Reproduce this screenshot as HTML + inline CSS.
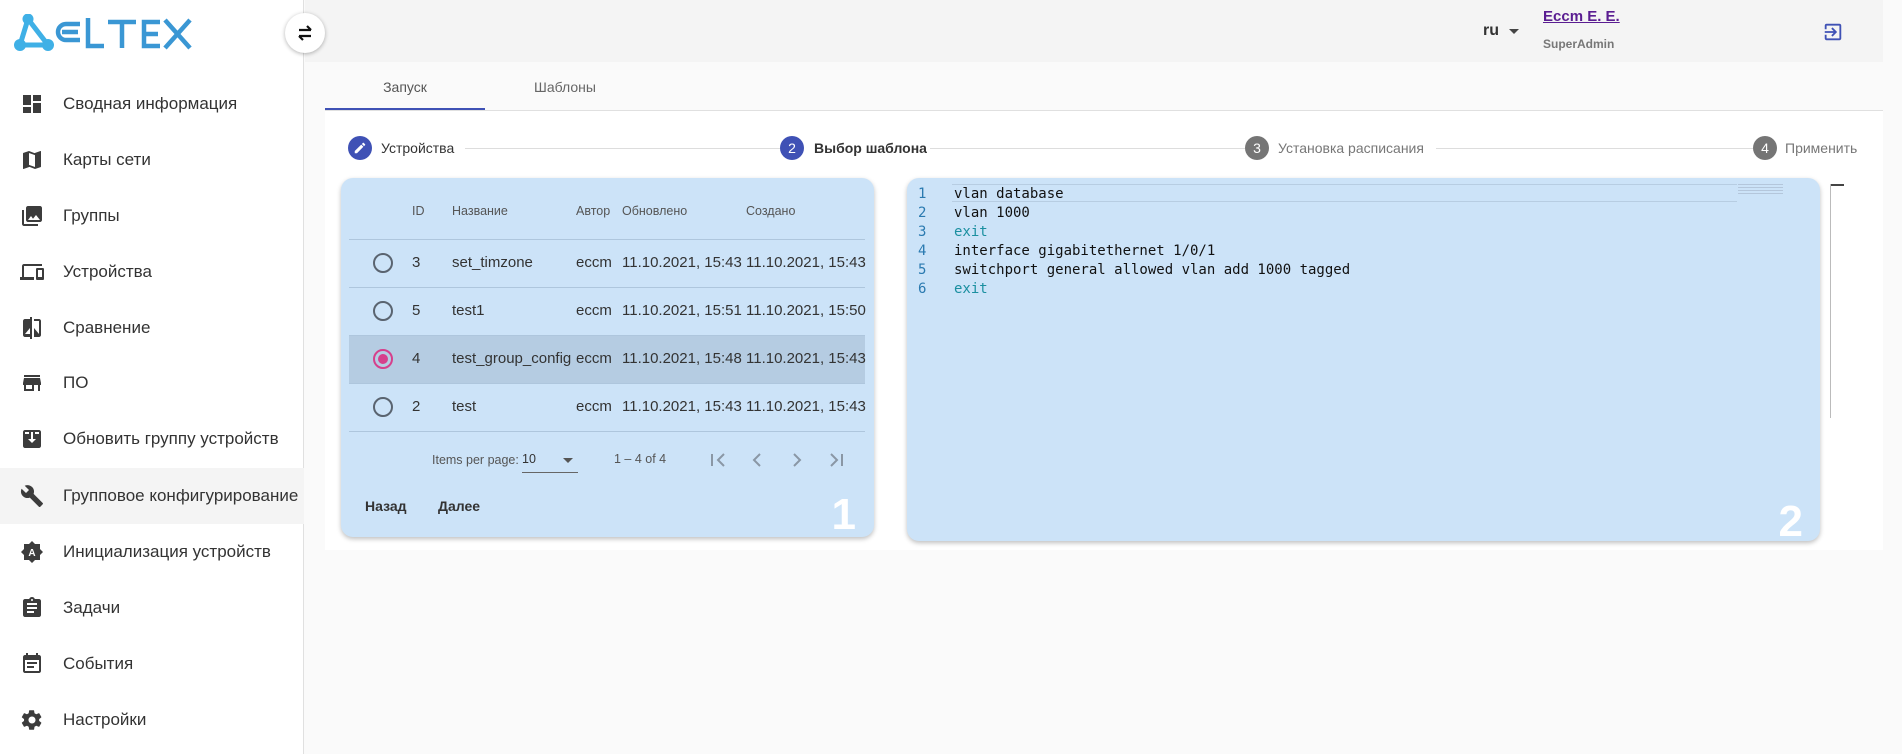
<!DOCTYPE html>
<html><head><meta charset="utf-8"><style>
*{box-sizing:border-box;margin:0;padding:0}
body{width:1902px;height:754px;overflow:hidden;background:#fafafa;font-family:"Liberation Sans",sans-serif;color:#333;position:relative}
.abs{position:absolute}
.side{left:0;top:0;width:304px;height:754px;background:#fff;border-right:1px solid #e0e0e0}
.mi{position:absolute;left:0;width:304px;height:56px;display:flex;align-items:center}
.mi svg{position:absolute;left:20px;width:24px;height:24px;fill:#3c3c3c}
.mi span{position:absolute;left:63px;font-size:17px;color:#333}
.hdr{left:305px;top:0;width:1578px;height:62px;background:#f4f4f4}
.panel{left:325px;top:111px;width:1558px;height:439px;background:#fff}
.card{background:#cce3f8;border-radius:12px;box-shadow:0 2px 5px rgba(0,0,0,.25)}
.th{font-size:12.5px;color:#555;top:204px}
.td{font-size:15px;color:#333}
.hl{position:absolute;left:349px;width:516px;height:1px;background:#aec6dd}
.radio{position:absolute;left:373px;width:20px;height:20px;border:2px solid #5a6470;border-radius:50%}
.step{font-size:14px;color:#333}
.sc{position:absolute;width:24px;height:24px;border-radius:50%;color:#fff;font-size:14px;text-align:center;line-height:24px}
.code{font-family:"DejaVu Sans Mono","Liberation Mono",monospace;font-size:14px;line-height:19px;white-space:pre}
</style></head><body>
<div class="abs side"></div>
<!-- logo -->
<svg class="abs" style="left:14px;top:14px" width="180" height="38" viewBox="0 0 180 38">
<g fill="#3fb0e6"><circle cx="14" cy="5" r="5.5"/><circle cx="6" cy="31" r="6"/><circle cx="34" cy="31" r="6"/></g>
<g stroke="#3fb0e6" stroke-width="5" fill="none"><path d="M14 5L6 31L34 31Z"/></g>
<g fill="none" stroke="#3a97d4" stroke-width="4.5">
<path d="M66 10H52a8 8 0 0 0 0 16H66M48 18H64"/>
<path d="M74 4V32H90"/>
<path d="M94 8H122M108 8V34"/>
<path d="M146 8H130V32H146M130 20H144"/>
<path d="M151 6L176 34M176 6L151 34"/>
</g></svg>
<!-- menu -->
<div class="mi" style="top:76px"><svg viewBox="0 0 24 24"><path d="M3 13h8V3H3v10zm0 8h8v-6H3v6zm10 0h8V11h-8v10zm0-18v6h8V3h-8z"/></svg><span>Сводная информация</span></div>
<div class="mi" style="top:132px"><svg viewBox="0 0 24 24"><path d="M20.5 3l-6 2.1L9 3 3.4 4.9c-.2.1-.4.3-.4.5V20.5c0 .3.2.5.5.5l6-2.1 5.5 2.1 5.6-1.9c.2-.1.4-.3.4-.5V3.5c0-.3-.2-.5-.5-.5zM15 19l-6-2.1V5l6 2.1V19z"/></svg><span>Карты сети</span></div>
<div class="mi" style="top:188px"><svg viewBox="0 0 24 24"><path d="M22 16V4c0-1.1-.9-2-2-2H8c-1.1 0-2 .9-2 2v12c0 1.1.9 2 2 2h12c1.1 0 2-.9 2-2zm-11-4l2 2.7 3-3.7 4 5H8l3-4zM2 6v14c0 1.1.9 2 2 2h14v-2H4V6H2z"/></svg><span>Группы</span></div>
<div class="mi" style="top:244px"><svg viewBox="0 0 24 24"><path d="M4 6h18V4H4c-1.1 0-2 .9-2 2v11H0v3h14v-3H4V6zm19 2h-6c-.5 0-1 .5-1 1v10c0 .5.5 1 1 1h6c.5 0 1-.5 1-1V9c0-.5-.5-1-1-1zm-1 9h-4v-7h4v7z"/></svg><span>Устройства</span></div>
<div class="mi" style="top:300px"><svg viewBox="0 0 24 24"><path d="M10 3H5c-1.1 0-2 .9-2 2v14c0 1.1.9 2 2 2h5v2h2V1h-2v2zm0 15H5l5-6v6zm9-15h-5v2h5v13l-5-6v9h5c1.1 0 2-.9 2-2V5c0-1.1-.9-2-2-2z"/></svg><span>Сравнение</span></div>
<div class="mi" style="top:355px"><svg viewBox="0 0 24 24"><path d="M20 4H4v2h16V4zm1 10v-2l-1-5H4l-1 5v2h1v6h10v-6h4v6h2v-6h1zm-9 4H6v-4h6v4z"/></svg><span>ПО</span></div>
<div class="mi" style="top:411px"><svg viewBox="0 0 24 24"><path d="M19 3H5c-1.1 0-2 .9-2 2v14c0 1.1.9 2 2 2h14c1.1 0 2-.9 2-2V5c0-1.1-.9-2-2-2zm0 16H5V5h4v2H5v12h14V7h-4V5h4v14zM13 5v7h3l-4 4-4-4h3V5h2z"/></svg><span>Обновить группу устройств</span></div>
<div class="mi" style="top:468px;background:#f4f4f4"><svg viewBox="0 0 24 24"><path d="M22.7 19l-9.1-9.1c.9-2.3.4-5-1.5-6.9-2-2-5-2.4-7.4-1.3L9 6 6 9 1.6 4.7C.4 7.1.9 10.1 2.9 12.1c1.9 1.9 4.6 2.4 6.9 1.5l9.1 9.1c.4.4 1 .4 1.4 0l2.3-2.3c.5-.4.5-1.1.1-1.4z"/></svg><span>Групповое конфигурирование</span></div>
<div class="mi" style="top:524px"><svg viewBox="0 0 24 24"><path d="M12 1l3 3h5v5l3 3-3 3v5h-5l-3 3-3-3H4v-5l-3-3 3-3V4h5z"/><text x="12" y="16" font-size="10" font-weight="bold" text-anchor="middle" fill="#fff" font-family="Liberation Sans">A</text></svg><span>Инициализация устройств</span></div>
<div class="mi" style="top:580px"><svg viewBox="0 0 24 24"><path d="M19 3h-4.2C14.4 1.8 13.3 1 12 1s-2.4.8-2.8 2H5c-1.1 0-2 .9-2 2v14c0 1.1.9 2 2 2h14c1.1 0 2-.9 2-2V5c0-1.1-.9-2-2-2zm-7 0c.6 0 1 .4 1 1s-.4 1-1 1-1-.4-1-1 .4-1 1-1zm2 14H7v-2h7v2zm3-4H7v-2h10v2zm0-4H7V7h10v2z"/></svg><span>Задачи</span></div>
<div class="mi" style="top:636px"><svg viewBox="0 0 24 24"><path d="M19 3h-1V1h-2v2H8V1H6v2H5c-1.1 0-2 .9-2 2v14c0 1.1.9 2 2 2h14c1.1 0 2-.9 2-2V5c0-1.1-.9-2-2-2zm0 16H5V8h14v11zM7 10h10v2H7zm0 4h7v2H7z"/></svg><span>События</span></div>
<div class="mi" style="top:692px"><svg viewBox="0 0 24 24"><path d="M19.1 12.9c0-.3.1-.6.1-.9s0-.6-.1-.9l2.1-1.6c.2-.2.2-.4.1-.6l-2-3.5c-.1-.2-.4-.3-.6-.2l-2.5 1c-.5-.4-1.1-.7-1.7-1l-.4-2.6c0-.3-.2-.4-.5-.4h-4c-.3 0-.5.2-.5.4l-.4 2.6c-.6.3-1.2.6-1.7 1l-2.5-1c-.2-.1-.5 0-.6.2l-2 3.5c-.1.2-.1.5.1.6l2.1 1.6c0 .3-.1.6-.1.9s0 .6.1.9l-2.1 1.6c-.2.2-.2.4-.1.6l2 3.5c.1.2.4.3.6.2l2.5-1c.5.4 1.1.7 1.7 1l.4 2.6c0 .2.2.4.5.4h4c.3 0 .5-.2.5-.4l.4-2.6c.6-.3 1.2-.6 1.7-1l2.5 1c.2.1.5 0 .6-.2l2-3.5c.1-.2.1-.5-.1-.6l-2.1-1.6zM12 15.5c-1.9 0-3.5-1.6-3.5-3.5s1.6-3.5 3.5-3.5 3.5 1.6 3.5 3.5-1.6 3.5-3.5 3.5z"/></svg><span>Настройки</span></div>
<!-- header -->
<div class="abs hdr"></div>
<div class="abs" style="left:285px;top:13px;width:40px;height:40px;border-radius:50%;background:#fff;box-shadow:0 1px 4px rgba(0,0,0,.3);z-index:5"><svg width="40" height="40" viewBox="0 0 40 40" fill="none" stroke="#111" stroke-width="2.2"><path d="M14 17H26M22 13l4 4M26 23H14M18 27l-4-4"/></svg></div>
<div class="abs" style="left:1483px;top:22px;font-size:16px;font-weight:bold;color:#333">ru</div>
<div class="abs" style="left:1509px;top:29px;width:0;height:0;border-left:5px solid transparent;border-right:5px solid transparent;border-top:5px solid #444"></div>
<div class="abs" style="left:1543px;top:8px;font-size:15px;font-weight:bold;color:#5a1d91;text-decoration:underline">Еccm Е. Е.</div>
<div class="abs" style="left:1543px;top:37px;font-size:12px;font-weight:bold;color:#777">SuperAdmin</div>
<svg class="abs" style="left:1822px;top:21px" width="22" height="22" viewBox="0 0 24 24" fill="#3f51b5"><path d="M10.1 15.6L11.5 17l5-5-5-5-1.4 1.4 2.6 2.6H3v2h9.7l-2.6 2.6zM19 3H5c-1.1 0-2 .9-2 2v4h2V5h14v14H5v-4H3v4c0 1.1.9 2 2 2h14c1.1 0 2-.9 2-2V5c0-1.1-.9-2-2-2z"/></svg>
<!-- tabs -->
<div class="abs" style="left:325px;top:79px;width:160px;text-align:center;font-size:14px;color:#555">Запуск</div>
<div class="abs" style="left:485px;top:79px;width:160px;text-align:center;font-size:14px;color:#666">Шаблоны</div>
<div class="abs" style="left:325px;top:108px;width:160px;height:2px;background:#3f51b5"></div>
<div class="abs" style="left:325px;top:110px;width:1558px;height:1px;background:#e0e0e0"></div>
<div class="abs panel"></div>
<!-- stepper -->
<div class="sc" style="left:348px;top:136px;background:#3f51b5"><svg width="14" height="14" viewBox="0 0 24 24" fill="#fff" style="margin-top:5px"><path d="M3 17.2V21h3.8L17.8 9.9l-3.7-3.7L3 17.2zM20.7 7c.4-.4.4-1 0-1.4l-2.3-2.3c-.4-.4-1-.4-1.4 0l-1.8 1.8 3.7 3.7L20.7 7z"/></svg></div>
<div class="abs step" style="left:381px;top:140px">Устройства</div>
<div class="abs" style="left:465px;top:148px;width:315px;height:1px;background:#ddd"></div>
<div class="sc" style="left:780px;top:136px;background:#3f51b5">2</div>
<div class="abs step" style="left:814px;top:140px;font-weight:bold">Выбор шаблона</div>
<div class="abs" style="left:930px;top:148px;width:315px;height:1px;background:#ddd"></div>
<div class="sc" style="left:1245px;top:136px;background:#757575">3</div>
<div class="abs step" style="left:1278px;top:140px;color:#777">Установка расписания</div>
<div class="abs" style="left:1436px;top:148px;width:317px;height:1px;background:#ddd"></div>
<div class="sc" style="left:1753px;top:136px;background:#757575">4</div>
<div class="abs step" style="left:1785px;top:140px;color:#777">Применить</div>
<!-- card1 -->
<div class="abs card" style="left:341px;top:178px;width:533px;height:359px"></div>
<div class="abs" style="left:349px;top:335px;width:516px;height:48px;background:#b5cce2"></div>
<div class="abs th" style="left:412px">ID</div><div class="abs th" style="left:452px">Название</div><div class="abs th" style="left:576px">Автор</div><div class="abs th" style="left:622px">Обновлено</div><div class="abs th" style="left:746px">Создано</div>
<div class="hl" style="top:239px"></div><div class="hl" style="top:287px"></div><div class="hl" style="top:335px"></div><div class="hl" style="top:383px"></div><div class="hl" style="top:431px"></div>
<div class="radio" style="top:253px"></div><div class="radio" style="top:301px"></div>
<div class="radio" style="top:349px;border-color:#d63f8c"><div style="margin:3px;width:10px;height:10px;border-radius:50%;background:#d63f8c"></div></div>
<div class="radio" style="top:397px"></div>
<div class="abs td" style="left:412px;top:254px">3</div><div class="abs td" style="left:452px;top:254px">set_timzone</div><div class="abs td" style="left:576px;top:254px">eccm</div><div class="abs td" style="left:622px;top:254px">11.10.2021, 15:43</div><div class="abs td" style="left:746px;top:254px">11.10.2021, 15:43</div>
<div class="abs td" style="left:412px;top:302px">5</div><div class="abs td" style="left:452px;top:302px">test1</div><div class="abs td" style="left:576px;top:302px">eccm</div><div class="abs td" style="left:622px;top:302px">11.10.2021, 15:51</div><div class="abs td" style="left:746px;top:302px">11.10.2021, 15:50</div>
<div class="abs td" style="left:412px;top:350px">4</div><div class="abs td" style="left:452px;top:350px">test_group_config</div><div class="abs td" style="left:576px;top:350px">eccm</div><div class="abs td" style="left:622px;top:350px">11.10.2021, 15:48</div><div class="abs td" style="left:746px;top:350px">11.10.2021, 15:43</div>
<div class="abs td" style="left:412px;top:398px">2</div><div class="abs td" style="left:452px;top:398px">test</div><div class="abs td" style="left:576px;top:398px">eccm</div><div class="abs td" style="left:622px;top:398px">11.10.2021, 15:43</div><div class="abs td" style="left:746px;top:398px">11.10.2021, 15:43</div>
<div class="abs" style="left:432px;top:453px;font-size:12.5px;color:#555">Items per page:</div>
<div class="abs" style="left:522px;top:452px;font-size:12.5px;color:#333">10</div>
<div class="abs" style="left:563px;top:458px;border-left:5px solid transparent;border-right:5px solid transparent;border-top:5px solid #555"></div>
<div class="abs" style="left:522px;top:472px;width:56px;height:1px;background:#666"></div>
<div class="abs" style="left:614px;top:452px;font-size:12.5px;color:#555">1 – 4 of 4</div>
<svg class="abs" style="left:705px;top:448px" width="145" height="24" viewBox="0 0 145 24" fill="none" stroke="#8a97a5" stroke-width="2"><path d="M7 6v12M19 6l-6 6 6 6"/><path d="M55 6l-6 6 6 6"/><path d="M89 6l6 6-6 6"/><path d="M126 6l6 6-6 6M137 6v12"/></svg>
<div class="abs" style="left:365px;top:498px;font-size:14px;font-weight:bold;color:#333">Назад</div>
<div class="abs" style="left:438px;top:498px;font-size:14px;font-weight:bold;color:#333">Далее</div>
<div class="abs" style="left:816px;top:490px;font-size:44px;font-weight:bold;color:#fff;width:40px;text-align:right">1</div>
<!-- card2 -->
<div class="abs card" style="left:907px;top:178px;width:913px;height:363px"></div>
<div class="abs" style="left:952px;top:184px;width:785px;height:18px;border-bottom:1px solid #b7cde2;border-top:1px solid #b7cde2"></div>
<div class="abs code" style="left:918px;top:185px;color:#2a7ab0">1
2
3
4
5
6</div>
<div class="abs code" style="left:954px;top:185px;color:#111">vlan database
vlan 1000
<span style="color:#1a8fa0">exit</span>
interface gigabitethernet 1/0/1
switchport general allowed vlan add 1000 tagged
<span style="color:#1a8fa0">exit</span></div>
<div class="abs" style="left:1738px;top:184px;width:45px;height:10px;background:repeating-linear-gradient(#556 0 1px,transparent 1px 3px);opacity:.2"></div>
<div class="abs" style="left:1763px;top:497px;font-size:44px;font-weight:bold;color:#fff;width:40px;text-align:right">2</div>
<div class="abs" style="left:1830px;top:184px;width:1px;height:234px;background:#bbb"></div>
<div class="abs" style="left:1831px;top:184px;width:13px;height:2px;background:#444"></div>
</body></html>
